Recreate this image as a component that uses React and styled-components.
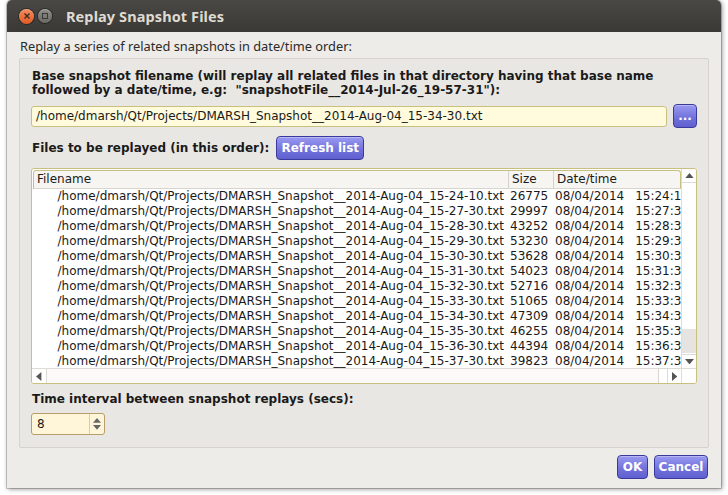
import React from 'react';
import styled, { createGlobalStyle } from 'styled-components';

const GlobalStyle = createGlobalStyle`
  html, body {
    margin: 0;
    padding: 0;
    background: #ffffff;
  }
  #root {
    width: 728px;
    height: 495px;
    overflow: hidden;
  }
`;

const UI_FONT = `"Noto Sans", "DejaVu Sans", sans-serif`;
const QT_FONT = `"DejaVu Sans", "Liberation Sans", sans-serif`;

const Window = styled.div`
  margin-left: 7px;
  width: 714px;
  height: 488px;
  display: flex;
  flex-direction: column;
  background: #eeece8;
  border-radius: 5px 5px 0 0;
  box-shadow: 0 0 0 1px rgba(0, 0, 0, 0.18), 1px 1px 5px rgba(0, 0, 0, 0.45);
  overflow: hidden;
`;

const TitleBar = styled.div`
  height: 32px;
  flex: none;
  display: flex;
  align-items: center;
  padding-left: 12px;
  gap: 4px;
  background: linear-gradient(#494844, #3a3935);
  font-family: ${UI_FONT};
  font-weight: 700;
  font-size: 14.5px;
  color: #dfdbd2;
`;

const Circle = styled.div`
  width: ${(p) => p.size}px;
  height: ${(p) => p.size}px;
  border-radius: 50%;
  display: flex;
  align-items: center;
  justify-content: center;
  background: ${(p) => p.bg};
  box-shadow: inset 0 1px 0 rgba(255, 255, 255, 0.25), 0 0 0 1px rgba(0, 0, 0, 0.35);
`;

const Title = styled.span`
  margin-left: 10px;
  letter-spacing: 0.1px;
`;

const Body = styled.div`
  flex: 1;
  display: flex;
  flex-direction: column;
  padding: 6px 12px 12px 12px;
`;

const Intro = styled.div`
  font-family: ${UI_FONT};
  font-size: 12.8px;
  line-height: 17px;
  color: #2a2a2a;
  padding-left: 1px;
`;

const GroupBox = styled.div`
  margin-top: 3px;
  display: flex;
  flex-direction: column;
  padding: 10px 11px 12px 11px;
  background: #e9e7e3;
  border: 1px solid #d6d3ce;
  border-radius: 2px;
  font-family: ${QT_FONT};
  font-size: 12px;
  color: #1a1a1a;
`;

const Label = styled.div`
  font-weight: 700;
  line-height: 14px;
  padding-left: 1px;
  margin-top: ${(p) => p.top || 0}px;
`;

const Row = styled.div`
  display: flex;
  align-items: center;
  gap: ${(p) => p.gap || 6}px;
  margin-top: ${(p) => p.top || 0}px;
`;

const TextField = styled.div`
  flex: 1;
  height: 19px;
  display: flex;
  align-items: center;
  padding-left: 4px;
  background: #fffbdc;
  border: 1px solid #c9c07f;
  border-radius: 3px;
  white-space: nowrap;
`;

const BlueButton = styled.button`
  height: ${(p) => p.h || 24}px;
  width: ${(p) => p.w}px;
  padding: 0;
  display: flex;
  align-items: center;
  justify-content: center;
  font-family: ${QT_FONT};
  font-size: 12px;
  font-weight: 700;
  color: #ffffff;
  background: linear-gradient(#9a9af2, #7373dc 55%, #5f5fcf);
  border: 1px solid #3a3a9c;
  border-radius: 4px;
  box-shadow: inset 0 1px 0 rgba(255, 255, 255, 0.3);
`;

const Table = styled.div`
  margin-top: 8px;
  height: 214px;
  display: grid;
  grid-template-columns: 1fr 15px;
  grid-template-rows: 1fr 15px;
  background: #ffffff;
  border: 1px solid #c9c07f;
  border-radius: 3px;
  overflow: hidden;
`;

const View = styled.div`
  overflow: hidden;
  padding: 1px 0 0 1px;
`;

const Header = styled.div`
  display: grid;
  grid-template-columns: 474px 45px 140px;
  height: 17px;
  background: #f6f5f1;
  border: 1px solid #c9c07f;
  border-bottom-color: #d8d5cf;
  border-radius: 3px 3px 0 0;
`;

const HeadCell = styled.div`
  padding-left: 3px;
  line-height: 17px;
  white-space: nowrap;
  overflow: hidden;
  border-left: ${(p) => (p.first ? 'none' : '1px solid #d5d2cc')};
`;

const DataRow = styled.div`
  display: grid;
  grid-template-columns: 475px 45px 140px;
  height: 15px;
  line-height: 15px;
  white-space: nowrap;
`;

const Cell = styled.div`
  overflow: hidden;
  text-align: ${(p) => p.align || 'left'};
  padding: ${(p) => (p.align === 'right' ? '0 4px 0 0' : '0 0 0 2px')};
`;

const Time = styled.span`
  margin-left: 11px;
`;

const VScroll = styled.div`
  display: flex;
  flex-direction: column;
  border-left: 1px solid #dedbd6;
  background: #ffffff;
`;

const HScroll = styled.div`
  display: flex;
  border-top: 1px solid #dedbd6;
  background: #ffffff;
`;

const ArrowBox = styled.div`
  flex: none;
  width: ${(p) => p.w || 14}px;
  height: ${(p) => p.h || 14}px;
  display: flex;
  align-items: center;
  justify-content: center;
`;

const Track = styled.div`
  flex: 1;
  display: flex;
  flex-direction: ${(p) => (p.vertical ? 'column' : 'row')};
  justify-content: flex-end;
  border-${(p) => (p.vertical ? 'top' : 'left')}: 1px solid #dedbd6;
  border-${(p) => (p.vertical ? 'bottom' : 'right')}: 1px solid #dedbd6;
`;

const Thumb = styled.div`
  background: #e6e4e0;
  ${(p) => (p.vertical ? 'height: 24px; margin-bottom: 1px;' : 'flex: 1; margin-right: 8px; background: #fbfaf8; border-right: 1px solid #d8d5cf;')}
`;

const Corner = styled.div`
  background: #ffffff;
  border-top: 1px solid #dedbd6;
  border-left: 1px solid #dedbd6;
`;

const SpinBox = styled.div`
  margin-top: 7px;
  width: 72px;
  height: 20px;
  display: flex;
  background: #fff6da;
  border: 1px solid #b99d6c;
  border-radius: 3px;
`;

const SpinValue = styled.div`
  flex: 1;
  padding-left: 5px;
  line-height: 20px;
`;

const SpinButtons = styled.div`
  width: 14px;
  display: flex;
  flex-direction: column;
  align-items: center;
  justify-content: center;
  gap: 2px;
  border-left: 1px solid #d8ccb0;
`;

const Footer = styled.div`
  margin-top: 7px;
  display: flex;
  justify-content: flex-end;
  gap: 6px;
  padding-right: 1px;
`;

const Arrow = ({ dir, size = 7, color = '#555' }) => {
  const pts = {
    up: `0,${size * 0.6} ${size / 2},0 ${size},${size * 0.6}`,
    down: `0,0 ${size / 2},${size * 0.6} ${size},0`,
    left: `${size * 0.6},0 0,${size / 2} ${size * 0.6},${size}`,
    right: `0,0 ${size * 0.6},${size / 2} 0,${size}`,
  }[dir];
  const vertical = dir === 'up' || dir === 'down';
  return (
    <svg width={vertical ? size : size * 0.6} height={vertical ? size * 0.6 : size}>
      <polygon points={pts} fill={color} />
    </svg>
  );
};

const base = '/home/dmarsh/Qt/Projects/DMARSH_Snapshot__2014-Aug-04_';
const files = [
  ['15-24-10', '26775', '15:24:10'],
  ['15-27-30', '29997', '15:27:30'],
  ['15-28-30', '43252', '15:28:30'],
  ['15-29-30', '53230', '15:29:30'],
  ['15-30-30', '53628', '15:30:30'],
  ['15-31-30', '54023', '15:31:30'],
  ['15-32-30', '52716', '15:32:30'],
  ['15-33-30', '51065', '15:33:30'],
  ['15-34-30', '47309', '15:34:30'],
  ['15-35-30', '46255', '15:35:30'],
  ['15-36-30', '44394', '15:36:30'],
  ['15-37-30', '39823', '15:37:30'],
];

export default function App() {
  return (
    <>
      <GlobalStyle />
      <Window>
        <TitleBar>
          <Circle size={15} bg="linear-gradient(#f58a5c, #df5a25)">
            <svg width="6" height="6" viewBox="0 0 6 6">
              <path d="M0.5 0.5 L5.5 5.5 M5.5 0.5 L0.5 5.5" stroke="#3b2a22" strokeWidth="1.4" />
            </svg>
          </Circle>
          <Circle size={14} bg="linear-gradient(#8d8b86, #6c6a65)">
            <svg width="6" height="6" viewBox="0 0 6 6">
              <rect x="0.5" y="0.5" width="5" height="5" fill="none" stroke="#3a3935" strokeWidth="1" />
            </svg>
          </Circle>
          <Title>Replay Snapshot Files</Title>
        </TitleBar>
        <Body>
          <Intro>Replay a series of related snapshots in date/time order:</Intro>
          <GroupBox>
            <Label>
              Base snapshot filename (will replay all related files in that directory having that base name
              <br />
              followed by a date/time, e.g:&nbsp; "snapshotFile__2014-Jul-26_19-57-31"):
            </Label>
            <Row top={7} gap={6}>
              <TextField>/home/dmarsh/Qt/Projects/DMARSH_Snapshot__2014-Aug-04_15-34-30.txt</TextField>
              <BlueButton w={24} h={24}>...</BlueButton>
            </Row>
            <Row top={8} gap={7}>
              <Label>Files to be replayed (in this order):</Label>
              <BlueButton w={88} h={24}>Refresh list</BlueButton>
            </Row>
            <Table>
              <View>
                <Header>
                  <HeadCell first>Filename</HeadCell>
                  <HeadCell>Size</HeadCell>
                  <HeadCell>Date/time</HeadCell>
                </Header>
                {files.map(([stamp, size, time]) => (
                  <DataRow key={stamp}>
                    <Cell align="right">{base + stamp + '.txt'}</Cell>
                    <Cell>{size}</Cell>
                    <Cell>
                      08/04/2014<Time>{time}</Time>
                    </Cell>
                  </DataRow>
                ))}
              </View>
              <VScroll>
                <ArrowBox h={13}>
                  <Arrow dir="up" size={9} />
                </ArrowBox>
                <Track vertical>
                  <Thumb vertical />
                </Track>
                <ArrowBox h={13}>
                  <Arrow dir="down" size={9} />
                </ArrowBox>
              </VScroll>
              <HScroll>
                <ArrowBox w={14}>
                  <Arrow dir="left" size={9} />
                </ArrowBox>
                <Track>
                  <Thumb />
                </Track>
                <ArrowBox w={13}>
                  <Arrow dir="right" size={9} />
                </ArrowBox>
              </HScroll>
              <Corner />
            </Table>
            <Label top={8}>Time interval between snapshot replays (secs):</Label>
            <SpinBox>
              <SpinValue>8</SpinValue>
              <SpinButtons>
                <Arrow dir="up" size={8} color="#666" />
                <Arrow dir="down" size={8} color="#666" />
              </SpinButtons>
            </SpinBox>
          </GroupBox>
          <Footer>
            <BlueButton w={31} h={24}>OK</BlueButton>
            <BlueButton w={54} h={24}>Cancel</BlueButton>
          </Footer>
        </Body>
      </Window>
    </>
  );
}
